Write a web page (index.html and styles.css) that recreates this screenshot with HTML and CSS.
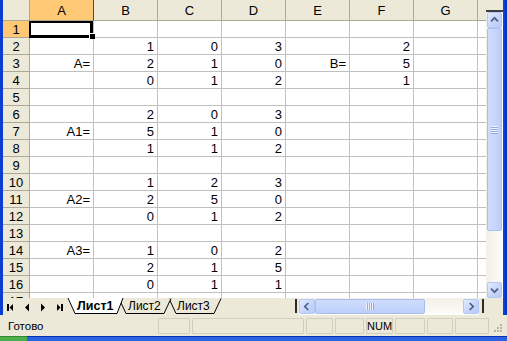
FILE: index.html
```html
<!DOCTYPE html>
<html>
<head>
<meta charset="utf-8">
<link rel="stylesheet" href="styles.css">
</head>
<body>
<div class="app">
  <div class="work">
    <div class="edge-l"></div>
    <div class="center">
      <div class="main">
        <div class="sheet">
          <div class="ch corner"></div><div class="ch sel">A</div><div class="ch">B</div><div class="ch">C</div><div class="ch">D</div><div class="ch">E</div><div class="ch">F</div><div class="ch">G</div><div class="ch"></div>
          <div class="rh sel">1</div><div class="c a1"></div><div class="c"></div><div class="c"></div><div class="c"></div><div class="c"></div><div class="c"></div><div class="c"></div><div class="c"></div>
          <div class="rh">2</div><div class="c"></div><div class="c">1</div><div class="c">0</div><div class="c">3</div><div class="c"></div><div class="c">2</div><div class="c"></div><div class="c"></div>
          <div class="rh">3</div><div class="c">A=</div><div class="c">2</div><div class="c">1</div><div class="c">0</div><div class="c">B=</div><div class="c">5</div><div class="c"></div><div class="c"></div>
          <div class="rh">4</div><div class="c"></div><div class="c">0</div><div class="c">1</div><div class="c">2</div><div class="c"></div><div class="c">1</div><div class="c"></div><div class="c"></div>
          <div class="rh">5</div><div class="c"></div><div class="c"></div><div class="c"></div><div class="c"></div><div class="c"></div><div class="c"></div><div class="c"></div><div class="c"></div>
          <div class="rh">6</div><div class="c"></div><div class="c">2</div><div class="c">0</div><div class="c">3</div><div class="c"></div><div class="c"></div><div class="c"></div><div class="c"></div>
          <div class="rh">7</div><div class="c">A1=</div><div class="c">5</div><div class="c">1</div><div class="c">0</div><div class="c"></div><div class="c"></div><div class="c"></div><div class="c"></div>
          <div class="rh">8</div><div class="c"></div><div class="c">1</div><div class="c">1</div><div class="c">2</div><div class="c"></div><div class="c"></div><div class="c"></div><div class="c"></div>
          <div class="rh">9</div><div class="c"></div><div class="c"></div><div class="c"></div><div class="c"></div><div class="c"></div><div class="c"></div><div class="c"></div><div class="c"></div>
          <div class="rh">10</div><div class="c"></div><div class="c">1</div><div class="c">2</div><div class="c">3</div><div class="c"></div><div class="c"></div><div class="c"></div><div class="c"></div>
          <div class="rh">11</div><div class="c">A2=</div><div class="c">2</div><div class="c">5</div><div class="c">0</div><div class="c"></div><div class="c"></div><div class="c"></div><div class="c"></div>
          <div class="rh">12</div><div class="c"></div><div class="c">0</div><div class="c">1</div><div class="c">2</div><div class="c"></div><div class="c"></div><div class="c"></div><div class="c"></div>
          <div class="rh">13</div><div class="c"></div><div class="c"></div><div class="c"></div><div class="c"></div><div class="c"></div><div class="c"></div><div class="c"></div><div class="c"></div>
          <div class="rh">14</div><div class="c">A3=</div><div class="c">1</div><div class="c">0</div><div class="c">2</div><div class="c"></div><div class="c"></div><div class="c"></div><div class="c"></div>
          <div class="rh">15</div><div class="c"></div><div class="c">2</div><div class="c">1</div><div class="c">5</div><div class="c"></div><div class="c"></div><div class="c"></div><div class="c"></div>
          <div class="rh">16</div><div class="c"></div><div class="c">0</div><div class="c">1</div><div class="c">1</div><div class="c"></div><div class="c"></div><div class="c"></div><div class="c"></div>
          <div class="rh">17</div><div class="c"></div><div class="c"></div><div class="c"></div><div class="c"></div><div class="c"></div><div class="c"></div><div class="c"></div><div class="c"></div>
        </div>
        <div class="vscroll">
          <div class="vsplit"></div>
          <div class="sbtn vbtn"><svg width="15" height="16" viewBox="0 0 15 16"><polyline points="3.5,9.5 7.5,5.5 11.5,9.5" fill="none" stroke="#4D6185" stroke-width="2"/></svg></div>
          <div class="vthumb"><span class="vgrip"></span></div>
          <div class="vtrack"></div>
          <div class="sbtn vbtn"><svg width="15" height="16" viewBox="0 0 15 16"><polyline points="3.5,6.5 7.5,10.5 11.5,6.5" fill="none" stroke="#4D6185" stroke-width="2"/></svg></div>
        </div>
      </div>
      <div class="tabbar">
        <svg class="tabs" width="225" height="17" viewBox="0 0 225 17">
          <g fill="#000">
            <rect x="4" y="6" width="2" height="7"/>
            <polygon points="6.5,9.5 10,6 10,13"/>
            <polygon points="22,9.5 26,5.5 26,13.5"/>
            <polygon points="38,5.5 42,9.5 38,13.5"/>
            <polygon points="54,6 57.5,9.5 54,13"/>
            <rect x="58" y="6" width="2" height="7"/>
          </g>
          <polygon points="166,0.5 173,16 211,16 218,0.5" fill="#ECE9D8"/>
          <polyline points="166,0.5 173,15.5 211,15.5 218,0.5" fill="none" stroke="#000" stroke-width="1"/>
          <text x="174" y="12" class="tt">Лист3</text>
          <polygon points="116,0.5 123,16 161,16 168,0.5" fill="#ECE9D8"/>
          <polyline points="116,0.5 123,15.5 161,15.5 168,0.5" fill="none" stroke="#000" stroke-width="1"/>
          <text x="125" y="12" class="tt">Лист2</text>
          <polygon points="65,0 72,16 114,16 120,0" fill="#fff"/>
          <polyline points="65,0 72,15.5 114,15.5 120,0" fill="none" stroke="#000" stroke-width="1"/>
          <text x="74" y="12" class="tt act">Лист1</text>
        </svg>
        <div class="spacer"></div>
        <div class="hsplit"></div>
        <div class="hscroll">
          <div class="sbtn hbtn"><svg width="16" height="15" viewBox="0 0 16 15"><polyline points="9.5,3.5 5.5,7.5 9.5,11.5" fill="none" stroke="#4D6185" stroke-width="2"/></svg></div>
          <div class="hthumb"><span class="hgrip"></span></div>
          <div class="htrack"></div>
          <div class="sbtn hbtn"><svg width="16" height="15" viewBox="0 0 16 15"><polyline points="6.5,3.5 10.5,7.5 6.5,11.5" fill="none" stroke="#4D6185" stroke-width="2"/></svg></div>
        </div>
        <div class="hsplit2"></div>
        <div class="hcorner"></div>
      </div>
    </div>
    <div class="edge-r"></div>
  </div>
  <div class="status">
    <div class="stext">Готово</div>
    <div class="pan p1"></div>
    <div class="pan p2"></div>
    <div class="pan p3"></div>
    <div class="pan p4"></div>
    <div class="pan p5">NUM</div>
    <div class="pan p6"></div>
    <div class="pan p7"></div>
    <div class="pan p8"></div>
    <div class="grip"><svg width="12" height="12" viewBox="0 0 12 12" fill="#B8B4A2"><rect x="9" y="1" width="2" height="2"/><rect x="6" y="4" width="2" height="2"/><rect x="9" y="4" width="2" height="2"/><rect x="3" y="7" width="2" height="2"/><rect x="6" y="7" width="2" height="2"/><rect x="9" y="7" width="2" height="2"/></svg></div>
  </div>
  <div class="taskbar"><div class="start"></div></div>
</div>
</body>
</html>
```
FILE: styles.css
```css
* { box-sizing: border-box; margin: 0; padding: 0; }
html, body { width: 507px; height: 341px; overflow: hidden; }
body { font-family: "Liberation Sans", Arial, sans-serif; background: #ECE9D8; color: #000; }

.app { display: flex; flex-direction: column; width: 507px; height: 341px; }
.work { display: flex; height: 315px; }
.edge-l { width: 3px; background: #0B3DD0; }
.edge-r { width: 4px; background: linear-gradient(90deg, #0A48E8, #0030B8); }
.center { display: flex; flex-direction: column; width: 500px; }
.main { display: flex; height: 298px; }

.sheet {
  display: grid;
  grid-template-columns: 27px repeat(7, 64px) 64px;
  grid-template-rows: 21px repeat(17, 17px);
  width: 483px; height: 298px; overflow: hidden;
  background: #fff; font-size: 13px;
}
.c {
  border-right: 1px solid #C0C0C0; border-bottom: 1px solid #C0C0C0;
  padding: 1px 3px 0 0; line-height: 16px; text-align: right; white-space: nowrap;
}
.ch {
  background: #ECE9D8; border-right: 1px solid #ACA899; border-bottom: 1px solid #ACA899;
  text-align: center; padding-top: 2px; line-height: 18px;
}
.rh {
  background: #ECE9D8; border-right: 1px solid #ACA899; border-bottom: 1px solid #ACA899;
  text-align: center; padding-top: 1px; line-height: 16px;
}
.sel { background: #FFC875; }
.ch.sel { border-right-color: #3A4A7A; }
.a1 { position: relative; }
.a1::before {
  content: ""; position: absolute; left: -1px; top: 0; right: 0; bottom: -1px;
  border-style: solid; border-color: #000; border-width: 2px 3px 3px 2px;
}
.a1::after {
  content: ""; position: absolute; right: -2px; bottom: -2px; width: 5px; height: 5px;
  background: #000; box-shadow: -1px -1px 0 0 #fff;
}

.vscroll { width: 17px; display: flex; flex-direction: column; background: linear-gradient(90deg, #F1EFE6, #FDFDFA); }
.vsplit { height: 12px; background: #ECE9D8; border-bottom: 2px solid #3C3C3C; }
.sbtn {
  border: 1px solid #B5C7F2; border-radius: 2px;
  background: linear-gradient(135deg, #E3EBFE 0%, #C6D5FC 55%, #B7CBF8 100%);
  display: flex; align-items: center; justify-content: center;
}
.sbtn svg { display: block; }
.vbtn { height: 16px; margin: 0 1px; }
.vthumb {
  height: 203px; margin: 0 1px; border: 1px solid #A9BEEE; border-radius: 2px;
  background: linear-gradient(90deg, #CFDCFD, #BCCFFA);
  display: flex; align-items: center; justify-content: center;
}
.vgrip {
  width: 7px; height: 8px;
  background: repeating-linear-gradient(180deg, #F0F5FF 0 1px, #8DA9E8 1px 2px);
}
.vtrack { flex: 1; }

.tabbar { display: flex; height: 17px; background: #ECE9D8; }
.tabs { display: block; flex: none; }
.tt { font-family: "Liberation Sans", Arial, sans-serif; font-size: 12px; fill: #000; }
.tt.act { font-weight: bold; font-size: 12.5px; }
.spacer { flex: 1; }
.hsplit { width: 2px; margin: 1px 2px 2px 0; background: #2A2A2A; }
.hscroll { display: flex; align-items: center; width: 180px; background: linear-gradient(180deg, #F1EFE6, #FDFDFA); }
.hbtn { width: 16px; height: 15px; }
.hthumb {
  width: 110px; height: 15px; border: 1px solid #A9BEEE; border-radius: 2px;
  background: linear-gradient(180deg, #CFDCFD, #BCCFFA);
  display: flex; align-items: center; justify-content: center;
}
.hgrip {
  width: 8px; height: 7px;
  background: repeating-linear-gradient(90deg, #F0F5FF 0 1px, #8DA9E8 1px 2px);
}
.htrack { width: 38px; height: 15px; }
.hsplit2 { width: 2px; margin: 1px 2px 2px 3px; background: #2A2A2A; }
.hcorner { width: 17px; background: #ECE9D8; }

.status { display: flex; align-items: center; height: 21px; gap: 2px; background: #ECE9D8; font-size: 11px; padding-right: 2px; }
.stext { flex: 1; padding-left: 8px; font-size: 11.5px; }
.pan { height: 16px; border: 1px solid #D3CFBF; border-radius: 1px; line-height: 14px; text-align: center; }
.p1 { width: 32px; }
.p2 { width: 112px; }
.p3 { width: 27px; }
.p4 { width: 29px; }
.p5 { width: 27px; }
.p6 { width: 30px; }
.p7 { width: 26px; }
.p8 { width: 34px; }
.grip { width: 14px; height: 21px; display: flex; align-items: flex-end; }
.grip svg { display: block; margin-bottom: 1px; }

.taskbar { height: 5px; background: linear-gradient(180deg, #0831B8 0 1px, #2A62E0 1px); display: flex; }
.start { width: 27px; background: linear-gradient(180deg, #2F8A2F 0 1px, #4CAF4C 1px); }
```
